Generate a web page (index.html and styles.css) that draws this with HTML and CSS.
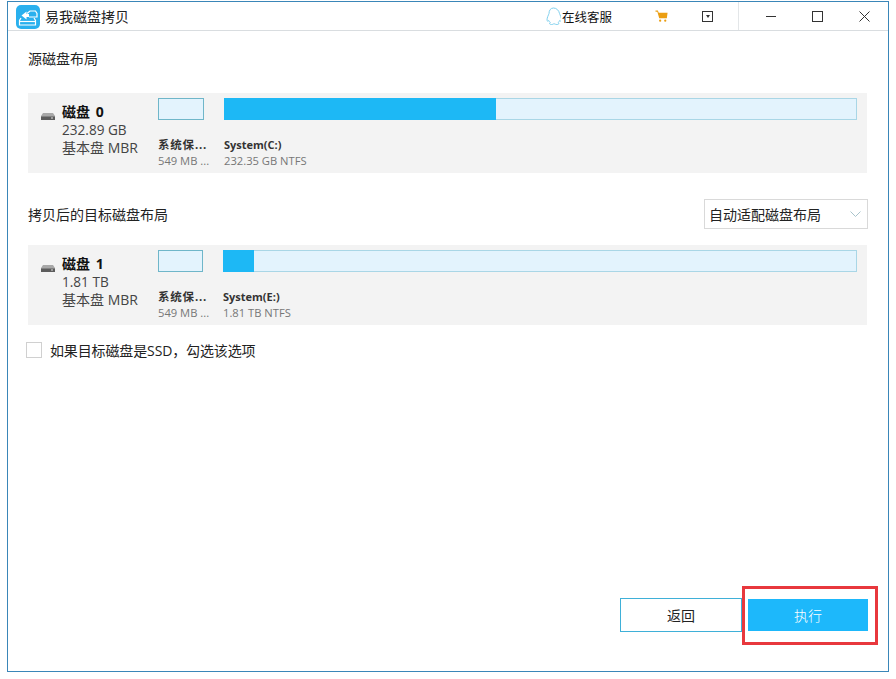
FILE: index.html
```html
<!DOCTYPE html>
<html lang="zh">
<head>
<meta charset="utf-8">
<title>易我磁盘拷贝</title>
<link rel="stylesheet" href="styles.css">
</head>
<body>
<div class="window">
  <header class="titlebar">
    <svg class="logo" viewBox="0 0 24 24" aria-hidden="true">
      <rect width="24" height="24" rx="5" fill="#29b0ee"/>
      <path d="M5 13 3.500 15.500V20h16v-4.500L18 13" fill="none" stroke="#fff" stroke-width="1.200"/>
      <path d="M3.500 16.500h16" stroke="#fff" stroke-width="1.200"/>
      <path d="M11 8.500 14 6h5.500l1.500 2.500V12h-8" fill="none" stroke="#fff" stroke-width="1.200"/>
      <path d="M5.500 10.500 10.500 6.500v2.500h2.500v3h-2.500v2.500z" fill="#fff"/>
    </svg>
    <span class="app-name">易我磁盘拷贝</span>
    <div class="tools">
      <svg class="qq" viewBox="0 0 15 19" aria-hidden="true">
        <path d="M7.500 1C4.500 1 3 3.500 3 6.500 2.500 8 1 10.500 1 13c0 1.300.7 1.500 1.800.5.400 1 .9 1.700 1.500 2.200-1 .500-1.200 1.800 1.200 1.800 1.100 0 1.700-.3 2-.6.500.1 1 .1 1.400 0 .3.300.9.600 2 .6 2.400 0 2.200-1.300 1.200-1.800.6-.5 1.100-1.200 1.500-2.200 1.100 1 1.900.8 1.900-.5 0-2.500-1.500-5-2-6.500C13 3.500 10.500 1 7.500 1z" fill="none" stroke="#7fd0ee" stroke-width="1"/>
      </svg>
      <span class="service">在线客服</span>
      <svg class="cart" viewBox="0 0 14 14" aria-hidden="true">
        <path d="M0 .5h2.500l1 2.500H13l-.8 6H4L2 2H0z" fill="#eb9e12"/>
        <circle cx="5" cy="11.500" r="1.200" fill="#eb9e12"/>
        <circle cx="10.500" cy="11.500" r="1.200" fill="#eb9e12"/>
      </svg>
      <span class="menu-box"><span class="menu-arrow"></span></span>
    </div>
    <div class="controls">
      <span class="ctl"><span class="ctl-min"></span></span>
      <span class="ctl"><span class="ctl-max"></span></span>
      <span class="ctl">
        <svg class="ctl-close" viewBox="0 0 11 11" aria-hidden="true"><path d="M.5.500l10 10M10.500.500l-10 10" stroke="#333" stroke-width="1" fill="none"/></svg>
      </span>
    </div>
  </header>

  <main class="content">
    <div class="section-head first"><span>源磁盘布局</span></div>
    <section class="disk">
      <div class="disk-info">
        <svg class="drive" viewBox="0 0 14 7" aria-hidden="true"><path d="M2 0h10l2 3v4H0V3z" fill="#a8a8a8"/><rect y="3.500" width="14" height="3.500" fill="#5c5c5c"/><rect x="10" y="4.500" width="2" height="1" fill="#ddd"/></svg>
        <div class="disk-text">
          <div class="disk-name">磁盘 0</div>
          <div class="disk-line">232.89 GB</div>
          <div class="disk-line disk-type">基本盘 MBR</div>
        </div>
      </div>
      <div class="parts">
        <div class="part part-small">
          <div class="bar"></div>
          <div class="part-name cjk">系统保...</div>
          <div class="part-size">549 MB ...</div>
        </div>
        <div class="part part-big">
          <div class="bar"><div class="fill" style="width:272px"></div></div>
          <div class="part-name">System(C:)</div>
          <div class="part-size">232.35 GB NTFS</div>
        </div>
      </div>
    </section>

    <div class="section-head second">
      <span>拷贝后的目标磁盘布局</span>
      <div class="select">
        <span>自动适配磁盘布局</span>
        <svg class="chev" viewBox="0 0 11 6" aria-hidden="true"><path d="M.5.500l5 5 5-5" fill="none" stroke="#a9c4cc" stroke-width="1"/></svg>
      </div>
    </div>
    <section class="disk">
      <div class="disk-info">
        <svg class="drive" viewBox="0 0 14 7" aria-hidden="true"><path d="M2 0h10l2 3v4H0V3z" fill="#a8a8a8"/><rect y="3.500" width="14" height="3.500" fill="#5c5c5c"/><rect x="10" y="4.500" width="2" height="1" fill="#ddd"/></svg>
        <div class="disk-text">
          <div class="disk-name">磁盘 1</div>
          <div class="disk-line">1.81 TB</div>
          <div class="disk-line disk-type">基本盘 MBR</div>
        </div>
      </div>
      <div class="parts tgt">
        <div class="part part-small">
          <div class="bar"></div>
          <div class="part-name cjk">系统保...</div>
          <div class="part-size">549 MB ...</div>
        </div>
        <div class="part part-big">
          <div class="bar"><div class="fill" style="width:31px"></div></div>
          <div class="part-name">System(E:)</div>
          <div class="part-size">1.81 TB NTFS</div>
        </div>
      </div>
    </section>

    <label class="check">
      <span class="box"></span>
      <span>如果目标磁盘是SSD，勾选该选项</span>
    </label>

    <div class="actions">
      <button class="btn btn-back">返回</button>
      <button class="btn btn-run">执行</button>
      <span class="highlight"></span>
    </div>
  </main>
</div>
</body>
</html>
```
FILE: styles.css
```css
* { box-sizing: border-box; }
html, body { margin: 0; padding: 0; background: #fff; }
body {
  width: 896px;
  height: 679px;
  overflow: hidden;
  padding: 1px 0 0 7px;
  font-family: "Open Sans", "Noto Sans CJK SC", sans-serif;
  font-size: 13px;
  color: #222;
}
.window {
  width: 882px;
  height: 671px;
  border: 1px solid #3a86b8;
  display: flex;
  flex-direction: column;
  background: #fff;
}
.titlebar {
  height: 29px;
  flex: none;
  border-bottom: 1px solid #d9dde0;
  display: flex;
  align-items: center;
  padding-left: 8px;
}
.logo { width: 24px; height: 24px; flex: none; margin-top: 1px; }
.app-name { margin-left: 5px; font-size: 14px; color: #222; }
.tools {
  margin-left: auto;
  height: 100%;
  display: flex;
  align-items: center;
  width: 193px;
  border-right: 1px solid #e3e6e8;
  flex: none;
}
.qq { width: 15px; height: 19px; flex: none; }
.service { font-size: 12.500px; color: #111; margin-left: 1px; }
.cart { width: 14px; height: 13px; margin-left: 43px; flex: none; }
.menu-box {
  width: 11px;
  height: 11px;
  border: 1px solid #333;
  margin-left: 33px;
  display: flex;
  align-items: center;
  justify-content: center;
  flex: none;
}
.menu-arrow {
  width: 0;
  height: 0;
  border-left: 2.500px solid transparent;
  border-right: 2.500px solid transparent;
  border-top: 3px solid #333;
}
.controls { display: flex; height: 100%; width: 149px; flex: none; padding-left: 8px; }
.ctl { width: 47px; display: flex; align-items: center; justify-content: center; flex: none; }
.ctl-min { width: 10px; height: 1px; background: #333; }
.ctl-max { width: 11px; height: 11px; border: 1px solid #333; }
.ctl-close { width: 11px; height: 11px; }
.content {
  flex: 1;
  position: relative;
  padding: 0 20px 0 20px;
  display: flex;
  flex-direction: column;
}
.section-head {
  display: flex;
  align-items: center;
  justify-content: space-between;
  font-size: 14px;
  color: #222;
}
.section-head.first { height: 62px; padding-bottom: 8px; }
.section-head.second { height: 72px; padding-top: 10px; }
.disk {
  height: 80px;
  width: 839px;
  background: #f3f3f3;
  display: flex;
  flex: none;
}
.disk-info { width: 130px; display: flex; flex: none; padding: 10px 0 0 13px; }
.drive { width: 14px; height: 7px; margin-top: 10px; flex: none; }
.disk-text { margin-left: 7px; }
.disk-name { font-weight: 700; font-size: 14px; line-height: 18px; color: #111; word-spacing: 2px; }
.disk-line { font-size: 13.600px; line-height: 18px; color: #444; }
.disk-type { font-size: 14px; }
.parts { flex: 1; display: flex; gap: 20px; padding: 5px 10px 0 0; }
.part-small { width: 46px; flex: none; }
.tgt .part-small { width: 45px; }
.part-big { flex: 1; }
.bar {
  height: 22px;
  background: #e3f3fd;
  border: 1px solid #6fb6c9;
}
.part-big .bar { border-color: #a9d6e6; }
.fill { background: #1db8f5; margin: -1px 0 0 -1px; height: 22px; }
.part-name {
  margin-top: 17px;
  font-size: 11px;
  font-weight: 700;
  line-height: 15px;
  white-space: nowrap;
  color: #333;
}
.part-name.cjk { font-size: 11.500px; letter-spacing: .8px; }
.part-size {
  margin-top: 1px;
  font-size: 11.200px;
  line-height: 15px;
  white-space: nowrap;
  color: #777;
}
.select {
  width: 164px;
  height: 30px;
  border: 1px solid #d9d9d9;
  display: flex;
  align-items: center;
  justify-content: space-between;
  padding: 0 6px 0 4px;
  color: #222;
  font-size: 14px;
}
.chev { width: 11px; height: 6px; }
.check {
  display: flex;
  align-items: center;
  height: 53px;
  flex: none;
  padding-bottom: 4px;
  margin-left: -2px;
  font-size: 14px;
  letter-spacing: -.13px;
  color: #222;
}
.box { width: 16px; height: 16px; border: 1px solid #d0d0d0; margin-right: 8px; flex: none; }
.actions {
  margin-top: auto;
  margin-bottom: 39px;
  display: flex;
  justify-content: flex-end;
  align-items: center;
  position: relative;
}
.btn { font-family: inherit; font-size: 14px; border-radius: 0; padding: 0; cursor: pointer; }
.btn-back {
  width: 122px;
  height: 34px;
  background: #fff;
  border: 1px solid #3fb0d8;
  color: #222;
  margin-right: 6px;
}
.btn-run {
  width: 120px;
  height: 32px;
  background: #1db8fb;
  border: 0;
  color: #fff;
  font-weight: 300;
}
.highlight {
  position: absolute;
  right: -10px;
  top: -12px;
  width: 136px;
  height: 59px;
  border: 3px solid #e8383d;
  pointer-events: none;
}
```
